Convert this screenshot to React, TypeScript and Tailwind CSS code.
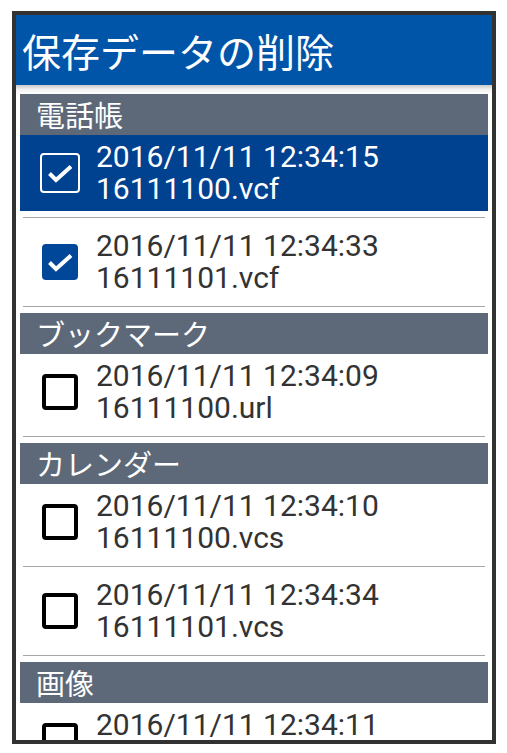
import React from 'react'

type Entry = { date: string; file: string; checked?: boolean; active?: boolean }
type Group = { title: string; items: Entry[] }

const groups: Group[] = [
  {
    title: '電話帳',
    items: [
      { date: '2016/11/11 12:34:15', file: '16111100.vcf', checked: true, active: true },
      { date: '2016/11/11 12:34:33', file: '16111101.vcf', checked: true },
    ],
  },
  {
    title: 'ブックマーク',
    items: [{ date: '2016/11/11 12:34:09', file: '16111100.url' }],
  },
  {
    title: 'カレンダー',
    items: [
      { date: '2016/11/11 12:34:10', file: '16111100.vcs' },
      { date: '2016/11/11 12:34:34', file: '16111101.vcs' },
    ],
  },
  {
    title: '画像',
    items: [{ date: '2016/11/11 12:34:11', file: '' }],
  },
]

function Check() {
  return (
    <svg width="36" height="36" viewBox="0 0 36 36" fill="none">
      <path d="M7.5 18.5 L14 25 L29 11.5" stroke="white" strokeWidth="4" strokeLinecap="butt" strokeLinejoin="miter" />
    </svg>
  )
}

function Box({ checked, active }: { checked?: boolean; active?: boolean }) {
  if (active) {
    return (
      <div className="w-[40px] h-[40px] rounded-[4px] border-2 border-white flex items-center justify-center">
        <Check />
      </div>
    )
  }
  if (checked) {
    return (
      <div className="w-[36px] h-[36px] rounded-[4px] bg-[#00479a] flex items-center justify-center">
        <Check />
      </div>
    )
  }
  return <div className="w-[36px] h-[36px] rounded-[4px] border-4 border-black" />
}

function Row({ entry, first }: { entry: Entry; first: boolean }) {
  return (
    <div className={first ? 'pb-[6px]' : 'pt-[6px] pb-[6px]'}>
      <div className={`h-[76px] flex items-center ${entry.active ? 'bg-[#004190] text-white' : 'text-[#333333]'}`}>
        <div className="w-[80px] flex justify-center shrink-0">
          <Box checked={entry.checked} active={entry.active} />
        </div>
        <div className="text-[30px] leading-[32px] font-['Roboto',sans-serif] -ml-[4px]">
          <div>{entry.date}</div>
          <div>{entry.file || '\u00a0'}</div>
        </div>
      </div>
    </div>
  )
}

export default function App() {
  return (
    <div className="w-[507px] h-[753px] bg-white pt-[11px] pl-[12px]">
      <div className="w-[484px] h-[733px] border-4 border-[#323232] overflow-hidden bg-white font-['Noto_Sans_CJK_JP','Roboto',sans-serif]">
        {/* Title bar */}
        <div className="h-[70px] bg-[#0055a9] flex items-center pl-[6px]">
          <h1 className="text-white text-[39px] leading-none">保存データの削除</h1>
        </div>
        <div className="h-[9px] bg-gradient-to-b from-[#c9c9c9] via-[#f2f2f2] to-white" />

        <div className="px-[4px]">
          {groups.map((g, gi) => (
            <div key={g.title}>
              <div className={`h-[41px] bg-[#5d6979] text-white text-[29px] leading-none flex items-center pl-[16px] ${gi > 0 ? 'mt-[6px]' : ''}`}>
                {g.title}
              </div>
              {g.items.map((e, i) => (
                <div key={e.date + i}>
                  <Row entry={e} first={i === 0} />
                  <div className="mx-[3px] h-px bg-[#a6a6a6]" />
                </div>
              ))}
            </div>
          ))}
        </div>
      </div>
    </div>
  )
}
